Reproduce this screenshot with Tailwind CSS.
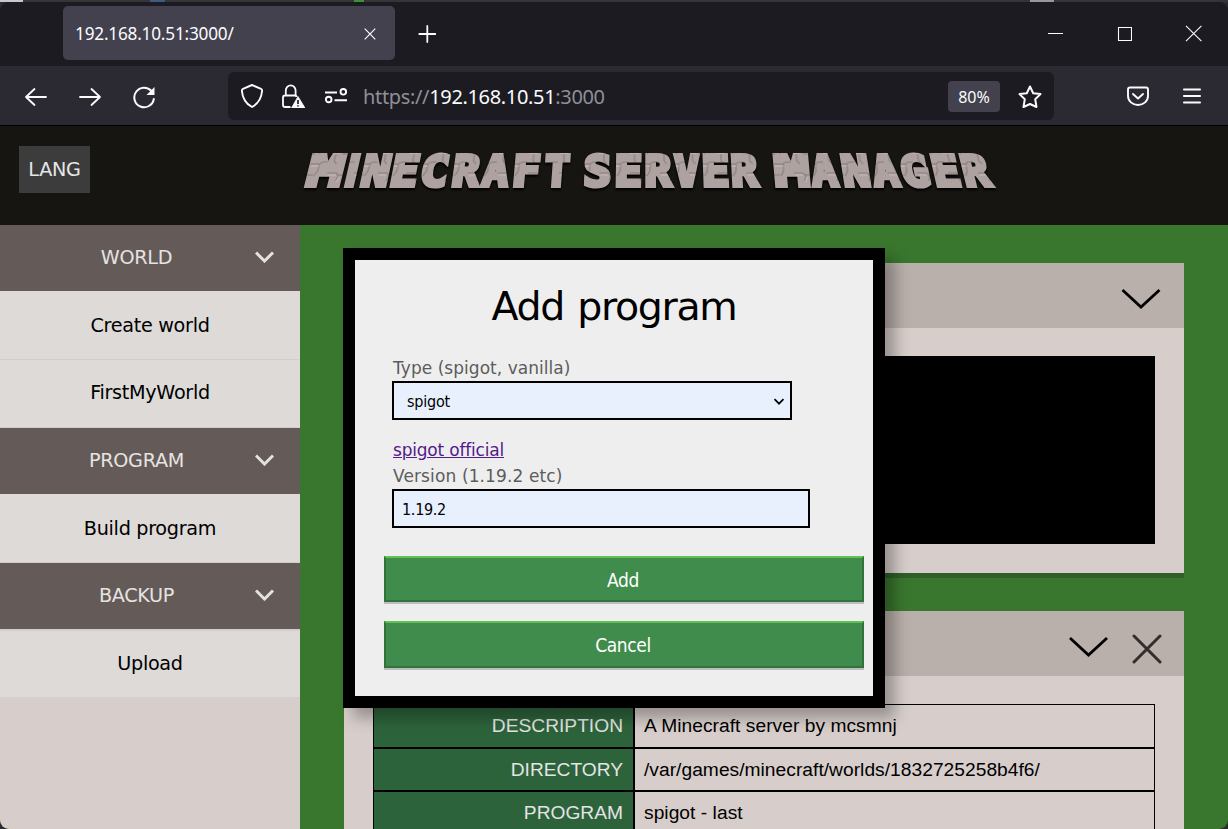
<!DOCTYPE html>
<html lang="en">
<head>
<meta charset="utf-8">
<title>Minecraft Server Manager</title>
<script src="https://cdn.jsdelivr.net/npm/@tailwindcss/browser@4"></script>
</head>
<body class="h-[829px] w-[1228px] overflow-hidden bg-black">
<div class="relative flex h-[829px] w-[1228px] flex-col overflow-hidden bg-[#2c2c30] font-['DejaVu_Sans',sans-serif]">

  <!-- sliver of the window behind -->
  <div class="flex h-[2px] shrink-0 bg-[#353538]">
    <div class="h-full w-[23px] bg-[#c8c8cc]"></div>
    <div class="ml-[127px] h-full w-[15px] bg-[#405a85]"></div>
    <div class="ml-[189px] h-full w-[10px] bg-[#3f8f3f]"></div>
    <div class="ml-[666px] h-full w-[24px] bg-[#98989c]"></div>
  </div>

  <div class="flex min-h-0 flex-1 flex-col overflow-hidden rounded-[9px] bg-[#1c1b22]">
    <!-- tab strip -->
    <div class="flex h-16 shrink-0 items-start justify-between bg-[#1c1b22] pt-1 pl-[63px] text-[#fbfbfe]">
      <div class="flex items-center">
        <div class="flex h-[54px] w-[332px] items-center justify-between rounded-[5px] bg-[#42414d] pt-px pr-[19px] pl-3">
          <span class="font-['Noto_Sans',sans-serif] text-[17.200px] tracking-[-0.2px]">192.168.10.51:3000/</span>
          <svg class="size-3" viewBox="0 0 12 12" fill="none" stroke="currentColor" stroke-width="1.2"><path d="M.7.7l10.6 10.6M11.3.7L.7 11.3"/></svg>
        </div>
        <svg class="mt-0.5 ml-[23px] size-[18px]" viewBox="0 0 18 18" fill="none" stroke="currentColor" stroke-width="1.8" stroke-linecap="round"><path d="M9.300 1v16M1.300 9h16"/></svg>
      </div>
      <div class="mt-[19px] mr-[26px] flex items-center gap-[53px]">
        <svg class="size-4" viewBox="0 0 16 16" fill="none" stroke="currentColor"><path d="M1 7.500h15"/></svg>
        <svg class="size-4" viewBox="0 0 16 16" fill="none" stroke="currentColor" stroke-width="1.1"><path d="M2.500 1.500h13v13h-13z"/></svg>
        <svg class="size-[17px]" viewBox="0 0 17 17" fill="none" stroke="currentColor" stroke-width="1.1"><path d="M1 .8l15.4 15.4M16.4.8L1 16.200"/></svg>
      </div>
    </div>

    <!-- navigation bar -->
    <div class="flex h-[60px] shrink-0 items-center border-b border-black bg-[#2b2a33] text-[#fbfbfe]">
      <div class="mt-0.5 ml-6 flex w-[204px] items-center gap-[30px]">
        <svg class="size-6" viewBox="0 0 24 24" fill="none" stroke="currentColor" stroke-width="1.8" stroke-linecap="round" stroke-linejoin="round"><path d="M22 12H2M10.500 4L2 12l8.500 8"/></svg>
        <svg class="size-6" viewBox="0 0 24 24" fill="none" stroke="currentColor" stroke-width="1.8" stroke-linecap="round" stroke-linejoin="round"><path d="M2 12h20M13.500 4L22 12l-8.500 8"/></svg>
        <svg class="size-6" viewBox="0 0 24 24" fill="none" stroke="currentColor" stroke-width="2" stroke-linecap="round"><path d="M21.800 14A9.800 9.800 0 1 1 19.500 6"/><path d="M22.500 2v8h-8z" fill="currentColor" stroke="none"/></svg>
      </div>
      <div class="flex h-12 w-[826px] items-center rounded-[6px] bg-[#1c1b22] pr-3 pl-3">
        <svg class="size-6" viewBox="0 0 24 24" fill="none" stroke="currentColor" stroke-width="1.9" stroke-linejoin="round"><path d="M12 1l9 3.800q1.200.5 1.100 2C21.500 14 18.500 19.500 12 23 5.500 19.500 2.500 14 1.900 6.800q-.1-1.500 1.100-2z"/></svg>
        <svg class="ml-[17px] size-6" viewBox="0 0 24 24" fill="none" stroke="currentColor" stroke-width="1.8"><path d="M9.500 23H4q-2 0-2-2v-7.500q0-2 2-2h9.500q2 0 2 1.500M4.800 11.500V6.500a4.900 5.200 0 0 1 9.800 0v5"/><path d="M17 12.500L24 24H10.500z" fill="currentColor" stroke="currentColor" stroke-width=".8" stroke-linejoin="round"/><path d="M17 16v4M17 21.200v1.300" stroke="#1c1b22" stroke-width="1.7"/></svg>
        <svg class="ml-[19px] size-6" viewBox="0 0 24 24" fill="none" stroke="currentColor" stroke-width="1.9"><path d="M1 8.500h12M10.500 16.200H23"/><circle cx="19.300" cy="7.800" r="2.800"/><circle cx="4.700" cy="15.500" r="2.800"/></svg>
        <span class="mt-[3px] ml-[15px] flex-1 font-['Noto_Sans',sans-serif] text-[20px] tracking-[-0.34px] whitespace-nowrap text-[#8f8f98]">https://<span class="text-[#fbfbfe]">192.168.10.51</span>:3000</span>
        <span class="mt-0.5 flex h-[31px] w-[52px] items-center justify-center rounded-[4px] bg-[#42414d] font-['Noto_Sans',sans-serif] text-[16px]">80%</span>
        <svg class="mt-0.5 ml-[18px] size-6" viewBox="0 0 24 24" fill="none" stroke="currentColor" stroke-width="2" stroke-linejoin="round"><path d="M12 1.500l3.200 6.700 7.300.9-5.300 5.100 1.300 7.800L12 19l-6.500 3 1.300-7.800L1.500 9.100l7.300-.9z"/></svg>
      </div>
      <svg class="ml-[72px] size-6" viewBox="0 0 24 24" fill="none" stroke="currentColor" stroke-width="1.900" stroke-linecap="round" stroke-linejoin="round"><path d="M4 3.500h16q2 0 2 2V12a10 9 0 0 1-20 0V5.500q0-2 2-2z"/><path d="M7 10l5 4.500 5-4.500"/></svg>
      <svg class="ml-[33px] h-4 w-[18px]" viewBox="0 0 18 16" fill="none" stroke="currentColor" stroke-width="1.800" stroke-linecap="round"><path d="M.9 1.500h16.200M.9 8h16.200M.9 14.500h16.200"/></svg>
    </div>

    <!-- page header -->
    <header class="flex h-[99px] shrink-0 items-start bg-[#161512] pt-5 pl-[19px]">
      <button class="h-[47px] w-[71px] bg-[#3c3c3c] pt-0.5 text-[19.2px] tracking-[-0.3px] text-[#e6e6e6]">LANG</button>
      <svg class="ml-[210px] h-[52px] w-[700px]" viewBox="300 146 700 52" role="img" aria-label="Minecraft Server Manager">
        <defs>
          <pattern id="stone" width="37" height="40" patternUnits="userSpaceOnUse">
            <rect width="37" height="40" fill="#aea2a0"/>
            <path d="M0 5h11l3 3h8M20 18h9l3-2h5M2 27h9l2 2h12M6 8v7l3 3M29 18v7l-3 5M14 29l-2 6M24 2l3 6" fill="none" stroke="#857a77" stroke-width="1"/>
            <path d="M1 7h9M21 20h8M3 29h8M15 31l-2 5" fill="none" stroke="#c9bebb" stroke-width="1"/>
          </pattern>
        </defs>
        <g fill="url(#stone)" stroke="url(#stone)" stroke-width="4" stroke-linejoin="miter" text-anchor="middle" font-family="DejaVu Sans Mono, DejaVu Sans" font-weight="bold" font-size="42.500" class="drop-shadow-[0_2px_1px_#000]">
          <text transform="translate(322 186) skewX(-14)" textLength="35" lengthAdjust="spacingAndGlyphs">M</text>
          <text transform="translate(349 186) skewX(-13)" font-family="DejaVu Sans" textLength="13" lengthAdjust="spacingAndGlyphs">I</text>
          <text transform="translate(373 186) skewX(-12)" textLength="28" lengthAdjust="spacingAndGlyphs">N</text>
          <text transform="translate(402 186) skewX(-11)" textLength="28" lengthAdjust="spacingAndGlyphs">E</text>
          <text transform="translate(432 186) skewX(-10)" textLength="28" lengthAdjust="spacingAndGlyphs">C</text>
          <text transform="translate(464 186) skewX(-8)" textLength="27" lengthAdjust="spacingAndGlyphs">R</text>
          <text transform="translate(494 186) skewX(-7)" textLength="26" lengthAdjust="spacingAndGlyphs">A</text>
          <text transform="translate(525 186) skewX(-5)" textLength="28" lengthAdjust="spacingAndGlyphs">F</text>
          <text transform="translate(556 186) skewX(-4)" textLength="25" lengthAdjust="spacingAndGlyphs">T</text>
          <text transform="translate(597 186) skewX(-2)" textLength="28" lengthAdjust="spacingAndGlyphs">S</text>
          <text transform="translate(628 186) skewX(-1)" textLength="28" lengthAdjust="spacingAndGlyphs">E</text>
          <text transform="translate(658 186)" textLength="27" lengthAdjust="spacingAndGlyphs">R</text>
          <text transform="translate(687 186) skewX(1)" textLength="25" lengthAdjust="spacingAndGlyphs">V</text>
          <text transform="translate(716 186) skewX(2)" textLength="28" lengthAdjust="spacingAndGlyphs">E</text>
          <text transform="translate(745 186) skewX(3)" textLength="27" lengthAdjust="spacingAndGlyphs">R</text>
          <text transform="translate(793 186) skewX(5)" textLength="35" lengthAdjust="spacingAndGlyphs">M</text>
          <text transform="translate(826 186) skewX(7)" textLength="26" lengthAdjust="spacingAndGlyphs">A</text>
          <text transform="translate(858 186) skewX(9)" textLength="28" lengthAdjust="spacingAndGlyphs">N</text>
          <text transform="translate(888 186) skewX(10)" textLength="26" lengthAdjust="spacingAndGlyphs">A</text>
          <text transform="translate(918 186) skewX(12)" textLength="28" lengthAdjust="spacingAndGlyphs">G</text>
          <text transform="translate(949 186) skewX(13)" textLength="28" lengthAdjust="spacingAndGlyphs">E</text>
          <text transform="translate(979 186) skewX(14)" textLength="27" lengthAdjust="spacingAndGlyphs">R</text>
        </g>
      </svg>
    </header>

    <div class="flex min-h-0 flex-1 bg-[#3a772e]">
      <!-- sidebar -->
      <nav class="w-[300px] shrink-0 bg-[#d7cecb] text-center text-[19.2px] tracking-[-0.3px] text-black">
        <div class="flex h-[66px] items-center bg-[#645b58] pr-[25px] text-[#e6e3e2]">
          <span class="flex-1 pl-[18px]">WORLD</span>
          <svg class="mb-[3px] h-3 w-5" viewBox="0 0 20 12" fill="none" stroke="#e4e1e0" stroke-width="3"><path d="M1 1.500L9.500 10 18 1.500"/></svg>
        </div>
        <div class="flex h-[69px] items-center justify-center border-b border-[#d3cecd] bg-[#dddad8] pt-0.5">Create world</div>
        <div class="flex h-[68px] items-center justify-center border-b border-[#d3cecd] bg-[#dddad8]">FirstMyWorld</div>
        <div class="flex h-[66px] items-center bg-[#645b58] pr-[25px] text-[#e6e3e2]">
          <span class="flex-1 pl-[18px]">PROGRAM</span>
          <svg class="mb-[3px] h-3 w-5" viewBox="0 0 20 12" fill="none" stroke="#e4e1e0" stroke-width="3"><path d="M1 1.500L9.500 10 18 1.500"/></svg>
        </div>
        <div class="flex h-[69px] items-center justify-center border-b border-[#d3cecd] bg-[#dddad8] pt-0.5">Build program</div>
        <div class="flex h-[66px] items-center bg-[#645b58] pr-[25px] text-[#e6e3e2]">
          <span class="flex-1 pl-[18px]">BACKUP</span>
          <svg class="mb-[3px] h-3 w-5" viewBox="0 0 20 12" fill="none" stroke="#e4e1e0" stroke-width="3"><path d="M1 1.500L9.500 10 18 1.500"/></svg>
        </div>
        <div class="flex h-[68px] items-center justify-center border-t-2 border-[#d5cdca] bg-[#dddad8] pt-px">Upload</div>
      </nav>

      <!-- cards -->
      <main class="flex flex-1 flex-col pt-[38px] pr-11 pl-11">
        <section class="h-[310px] shrink-0 bg-[#d7cecb] shadow-[0_5px_0_#2f6026]">
          <div class="flex h-[65px] items-center justify-end bg-[#bab0ab] pt-1.5 pr-[23px]">
            <svg class="h-[22px] w-10" viewBox="0 0 40 22" fill="none" stroke="#000" stroke-width="2.800"><path d="M1.500 2L20 19 38.500 2"/></svg>
          </div>
          <div class="mx-[29px] mt-7 h-[188px] bg-black"></div>
        </section>
        <section class="mt-[38px] h-[400px] shrink-0 bg-[#d7cecb]">
          <div class="flex h-[65px] items-center justify-end bg-[#bab0ab] pr-[22px]">
            <svg class="mt-1.5 h-[22px] w-10" viewBox="0 0 40 22" fill="none" stroke="#000" stroke-width="2.800"><path d="M2 2l18.500 17L39 2"/></svg>
            <svg class="mt-[11px] ml-6 size-[30px]" viewBox="0 0 30 30" fill="none" stroke="#302f2e" stroke-width="3" stroke-linecap="round"><path d="M2 2l26 26M28 2L2 28"/></svg>
          </div>
          <div class="mx-[29px] mt-7 grid grid-cols-[259px_519px] gap-0.5 border border-black bg-black font-['Liberation_Sans',sans-serif] text-[19.200px] leading-[41px]">
            <div class="h-[42px] bg-[#2d633b] pr-2.5 text-right text-[#e4e4e4]">DESCRIPTION</div>
            <div class="h-[42px] bg-[#d7cecb] pl-[9px] tracking-[0.04px]">A Minecraft server by mcsmnj</div>
            <div class="h-[41px] bg-[#2d633b] pr-2.5 text-right text-[#e4e4e4]">DIRECTORY</div>
            <div class="h-[41px] bg-[#d7cecb] pl-[9px] tracking-[0.03px]">/var/games/minecraft/worlds/1832725258b4f6/</div>
            <div class="h-[42px] bg-[#2d633b] pr-2.5 text-right text-[#e4e4e4]">PROGRAM</div>
            <div class="h-[42px] bg-[#d7cecb] pl-[9px] tracking-[0.04px]">spigot - last</div>
          </div>
        </section>
      </main>
    </div>
  </div>

  <!-- dialog -->
  <div class="absolute top-[248px] left-[343px] flex h-[460px] w-[542px] flex-col border-[12px] border-black bg-[#eee] shadow-[10px_10px_14px_rgba(0,0,0,0.3)]">
    <h1 class="mt-[22px] text-center text-[39.500px] leading-[48px] tracking-[-1.350px] [word-spacing:2px]">Add program</h1>
    <div class="mt-[26px] pl-[37px] text-[17px] leading-[24px] tracking-[0.04px] text-[#5c5c5c]">
      <div class="mb-px pl-px leading-6">Type (spigot, vanilla)</div>
      <div class="flex h-[39px] w-[400px] items-center justify-between border-2 border-black bg-[#e8f0fe] pr-[5px] pl-[13px] text-[16px] text-black">
        <span class="pt-0.5 font-['DejaVu_Sans_Condensed','Noto_Sans',sans-serif] tracking-[-0.2px]">spigot</span>
        <svg class="mt-0.5 h-2 w-3" viewBox="0 0 12 8" fill="none" stroke="#000" stroke-width="1.700"><path d="M1.500 1.200L6 5.700l4.500-4.500"/></svg>
      </div>
      <div class="mt-[17px] pl-px leading-[26px] tracking-[-0.2px]"><a class="text-[#551a8b] underline" href="#">spigot official</a></div>
      <div class="mt-px pl-px leading-[25px] tracking-[0.12px]">Version (1.19.2 etc)</div>
      <div class="flex h-[39px] w-[418px] items-center border-2 border-black bg-[#e8f0fe] pt-0.5 pl-2 font-['DejaVu_Sans_Condensed','Noto_Sans',sans-serif] text-[16px] tracking-[-0.300px] text-black">1.19.2</div>
    </div>
    <button class="mt-7 ml-[29px] h-[46px] w-[480px] shrink-0 border-2 border-[#33713f] border-t-[#62c152] bg-[#3f8c4c] pt-0.5 pr-0.5 font-['DejaVu_Sans_Condensed','Noto_Sans',sans-serif] text-[19px] tracking-[-0.400px] text-white shadow-[0_2px_0_#bdbdbd]">Add</button>
    <button class="mt-[19px] ml-[29px] h-[47px] w-[480px] shrink-0 border-2 border-[#33713f] border-t-[#62c152] bg-[#3f8c4c] pt-0.5 pr-0.5 font-['DejaVu_Sans_Condensed','Noto_Sans',sans-serif] text-[19px] tracking-[-0.400px] text-white shadow-[0_2px_0_#bdbdbd]">Cancel</button>
  </div>
</div>
</body>
</html>
